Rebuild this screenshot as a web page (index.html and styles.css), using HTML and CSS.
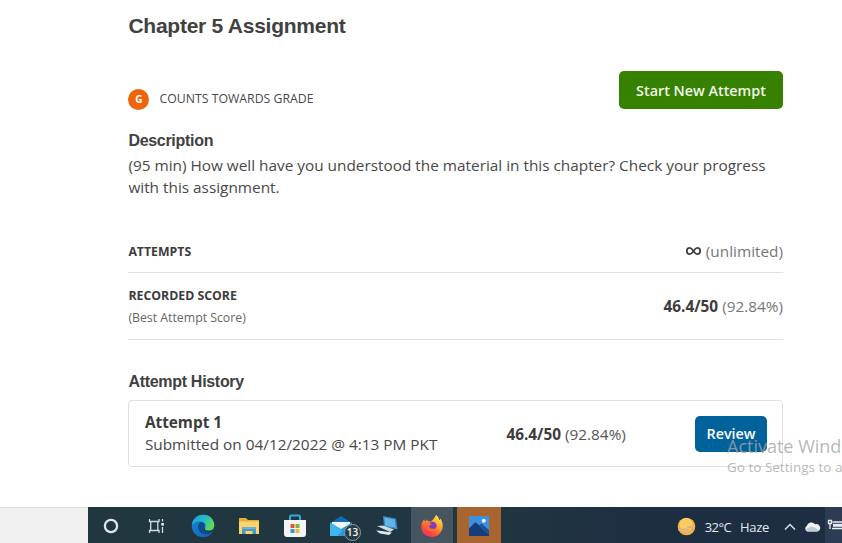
FILE: index.html
```
<!DOCTYPE html>
<html lang="en">
<head>
<meta charset="utf-8">
<title>Chapter 5 Assignment</title>
<link rel="stylesheet" href="styles.css">
</head>
<body>
<main class="page">
  <h1 class="title"><span>Chapter 5 Assignment</span></h1>
  <div class="summary">
    <div class="grade"><span class="grade-badge">G</span><span class="grade-label">COUNTS TOWARDS GRADE</span></div>
    <button class="btn btn-start"><span>Start New Attempt</span></button>
  </div>
  <h2 class="subhead description-head"><span>Description</span></h2>
  <p class="description"><span>(95 min) How well have you understood the material in this chapter? Check your progress</span><br><span>with this assignment.</span></p>
  <section class="row row-attempts">
    <div class="row-label"><span>ATTEMPTS</span></div>
    <div class="row-value"><svg class="infinity" width="15" height="10" viewBox="0 0 15 10"><path d="M7.5 5C6.2 3 5.2 1.8 3.8 1.8A2.9 3.1 0 0 0 3.8 8.2C5.2 8.2 6.2 7 7.5 5C8.8 3 9.8 1.8 11.2 1.8A2.9 3.1 0 0 1 11.2 8.2C9.8 8.2 8.8 7 7.5 5Z" fill="none" stroke="#3c3c3c" stroke-width="1.7"/></svg><span class="muted">(unlimited)</span></div>
  </section>
  <section class="row row-score">
    <div class="row-label"><span>RECORDED SCORE</span><small>(Best Attempt Score)</small></div>
    <div class="row-value"><b>46.4/50</b><span class="muted">(92.84%)</span></div>
  </section>
  <h2 class="subhead history-head"><span>Attempt History</span></h2>
  <section class="attempt">
    <div class="attempt-info"><b>Attempt 1</b><span>Submitted on 04/12/2022 @ 4:13 PM PKT</span></div>
    <div class="attempt-score"><b>46.4/50</b><span>(92.84%)</span></div>
    <button class="btn btn-review"><span>Review</span></button>
  </section>
</main>
<footer class="taskbar">
  <div class="search-end"></div>
  <div class="apps">
    <div class="app"><svg width="18" height="18" viewBox="0 0 18 18"><circle cx="9" cy="9" r="6.1" fill="none" stroke="#dfe6e9" stroke-width="2.3"/></svg></div>
    <div class="app"><svg width="18" height="18" viewBox="0 0 18 18" fill="none" stroke="#d3dbde" stroke-width="1.3"><path d="M1.500 2v2.500h9.500V2M1.500 16v-2.500h9.500V16M2.700 4.500v9M9.800 4.500v9M14.500 2v2.500M14.500 10v6"/><path d="M13.300 6h2.600v2.600h-2.600z" fill="#e6ecee" stroke="none"/></svg></div>
    <div class="app"><svg width="24" height="24" viewBox="0 0 24 24"><defs><linearGradient id="edge-top" x2="1" y2=".5"><stop stop-color="#1b9de2"/><stop offset=".55" stop-color="#25bbc4"/><stop offset="1" stop-color="#62d855"/></linearGradient><linearGradient id="edge-low" x2=".8" y2="1"><stop stop-color="#1685d8"/><stop offset="1" stop-color="#1464b8"/></linearGradient></defs><circle cx="12" cy="12" r="11.2" fill="url(#edge-low)"/><path d="M.8 11.6C1.6 5 6 .8 12 .8c7 0 11.4 5 11.3 10.4 0 3.5-2.6 5.3-5.5 5.3-2.7 0-4.4-1-3.8-2 1.5-2.5.6-6.4-4.1-7C6 7 2.2 8.500.8 11.6Z" fill="url(#edge-top)"/><path d="M9.500 8.300c-4.500 2.600-2.500 11.200 4.500 12 3.300.3 5.800-.8 7.700-2.600-3 1-6.700.5-8.500-1.900-1.200-1.500.4-2.800.5-4.500.1-1.500-1.700-3.500-4.200-3Z" fill="#0d4b8c"/><path d="M14 14.500c-.8 1.300 1.400 2.300 3.800 2.300 2.200 0 4-.8 4.900-2.300l-1.200 3.200c-3.100 1-6.800.3-8.300-1.900-.8-1 .2-1.700.7-2.500Z" fill="#203740"/></svg></div>
    <div class="app"><svg width="22" height="20" viewBox="0 0 22 20"><path d="M1 2h7l2 2h11v14H1z" fill="#e9ac36"/><path d="M1 5.500h20V18H1z" fill="#fad56d"/><path d="M4 18v-7h14v7h-3.500v-3h-7v3z" fill="#4799c7"/><path d="M4 11h14v2H4z" fill="#69b4d5"/></svg></div>
    <div class="app"><svg width="24" height="24" viewBox="0 0 24 24"><path d="M7 7V3q0-1.500 1.500-1.500h7Q17 1.500 17 3v4" fill="none" stroke="#36a7df" stroke-width="2"/><path d="M1 6h22v14q0 3-3 3H4q-3 0-3-3z" fill="#f3f5f5"/><path d="M7.500 10h4v4h-4z" fill="#e65335"/><path d="M12.500 10h4v4h-4z" fill="#80b536"/><path d="M7.500 15h4v4h-4z" fill="#299fd6"/><path d="M12.500 15h4v4h-4z" fill="#f4b52f"/></svg></div>
    <div class="app mail"><svg width="24" height="22" viewBox="0 0 24 22"><path d="M1 8 12 1l11 7v13H1z" fill="#1269b4"/><path d="M3 7h18v9H3z" fill="#f0f6f8"/><path d="M1 7.500 12 14l11-6.500V21H1z" fill="#259bdc"/><path d="M1 21V8l12 7.300L9 21z" fill="#42b7ee"/></svg><span class="mail-count">13</span></div>
    <div class="app"><svg width="24" height="22" viewBox="0 0 24 22"><path d="m8 1 13 2.500 1.500 11L9 12z" fill="#3687c5"/><path d="m9.300 2.500 10.400 2 1.100 8.300-10.400-2z" fill="#62b4e5"/><path d="m2 11 6-.500 11 4-4 2.500z" fill="#cfdae0"/><path d="m1 15.500 6 .500 10 1.500-3 2.500-9-1.500z" fill="#dfe7eb"/></svg></div>
    <div class="app app-firefox"><svg width="24" height="24" viewBox="0 0 24 24"><defs><linearGradient id="fire" x1=".85" x2=".2" y2="1"><stop stop-color="#fff04a"/><stop offset=".42" stop-color="#ff9a29"/><stop offset=".75" stop-color="#ff4741"/><stop offset="1" stop-color="#e93072"/></linearGradient></defs><path d="M16 1c2.500 1.800 3 3.600 3.200 5 .7-.4 1-1 1.200-1.600 2.600 4 3.400 9.100.6 13.300C18.800 21.200 15.700 23 12 23 5.800 23 1.200 18.500 1.200 12.600c0-3.300 1.300-5.500 3-7.400L5 7.700l2-2.200c.2 1.500 1.500 2.100 3.400 2.200C12 6.500 14.700 4.500 16 1Z" fill="url(#fire)"/><circle cx="12.400" cy="12" r="4.200" fill="#7b3bc2"/><path d="M4.500 9.500c2.500-1.800 5.800-.5 7.500 1-1.500.3-2.300 1.300-3.300 1.400 1.200 3.300 5 3.800 7.600 1.500-.7 4.700-8.500 5.800-11.800.6z" fill="#ff6b2c"/></svg></div>
    <div class="app app-photos"><svg width="22" height="22" viewBox="0 0 22 22"><path d="M1 1h20v20H1z" fill="#3f8fdd"/><path d="m1 13.500 5.500-5.500Q7.500 7 8.500 8L21 19.500V21H1z" fill="#153d79"/><path d="m11 10.300 1.500-1.300q1-.7 2 .3L21 15v4.500z" fill="#17569d"/><circle cx="15.800" cy="5.700" r="2" fill="#e8f6ff"/></svg></div>
  </div>
  <div class="tray">
    <svg class="sun" width="19" height="19" viewBox="0 0 19 19"><circle cx="9.500" cy="9.500" r="8.800" fill="#f4b33d"/><circle cx="9" cy="7.500" r="6.500" fill="#f9cd62"/><path d="M2 12.500h9M6 15h9M11 10h6" stroke="#e3b184" stroke-width="1.800" stroke-linecap="round"/></svg>
    <span class="temp">32°C</span><span class="weather">Haze</span>
    <svg class="chevron" width="12" height="8" viewBox="0 0 12 8"><path d="m1 6.500 5-5 5 5" fill="none" stroke="#d9e0e6" stroke-width="1.500"/></svg>
    <svg class="cloud" width="17" height="11" viewBox="0 0 17 11"><path d="M3.500 10.500A3 3 0 0 1 2.800 5 4.700 4.700 0 0 1 11 3.200 3.800 3.800 0 0 1 13.500 10.500Z" fill="#f2f5f7"/><path d="m2 8 6-2.700 7 3.500q-.5 1.700-2 1.700H4Q2.500 10.500 2 8Z" fill="#c2cbd3"/></svg>
    <div class="battery"><svg width="15" height="12" viewBox="0 0 15 12"><path d="M1.500 1.500h3v3h-3zM3 4.500V10M5.500 3H15M5 9.500H15" fill="none" stroke="#e7edf2" stroke-width="1.300"/><path d="M6 4.800h9v3H6z" fill="#e7edf2"/></svg></div>
  </div>
</footer>
<aside class="watermark"><span>Activate Wind</span><small>Go to Settings to a</small></aside>
</body>
</html>
```
FILE: styles.css
```
* { box-sizing: border-box; }
body {
  margin: 0;
  width: 842px;
  height: 543px;
  overflow: hidden;
  position: relative;
  display: flex;
  flex-direction: column;
  background: #fff;
  color: #484848;
  font: 16px/22px "Open Sans", sans-serif;
}
h1, h2, p { margin: 0; }
.page { height: 507px; padding: 0 59px 0 128.400px; }
.title { padding-top: 12px; font: bold 21px/28px "Liberation Sans", sans-serif; letter-spacing: -.25px; color: #414141; }
.summary { display: flex; justify-content: space-between; margin-top: 31px; height: 38px; }
.grade { display: flex; align-items: center; gap: 10px; padding-top: 18px; font-size: 12.300px; }
.grade-badge {
  width: 21px;
  height: 21px;
  border-radius: 50%;
  background: #ed6509;
  color: #fff;
  font-size: 10px;
  font-weight: 700;
  line-height: 21px;
  text-align: center;
}
.btn {
  border: 0;
  padding: 0;
  border-radius: 5px;
  color: #fff;
  font: 600 14.350px/20px "Open Sans", sans-serif;
  white-space: nowrap;
}
.btn-start { width: 164px; height: 38px; padding-top: 1px; background: #378100; color: #f2f8e9; }
.subhead { font: bold 16px/20px "Liberation Sans", sans-serif; letter-spacing: -.3px; color: #414141; }
.description-head { margin-top: 22px; }
.description { margin-top: 3px; height: 45px; font-size: 15.350px; line-height: 22px; white-space: nowrap; }
.row { display: flex; align-items: center; justify-content: space-between; border-bottom: 1px solid #e2e2e2; }
.row-attempts { height: 44px; margin-top: 30px; padding-top: 1px; }
.row-score { height: 67px; }
.row-label { display: flex; flex-direction: column; align-items: flex-start; padding-top: 2px; font-size: 12.300px; font-weight: 700; color: #3c3c3c; }
.row-label small { font-size: 12.300px; font-weight: 400; color: #666; }
.row-value { display: flex; align-items: center; gap: 4px; font-size: 15.350px; color: #3c3c3c; }
.infinity { margin-right: 1px; }
.muted { color: #777; }
.history-head { margin-top: 32px; }
.attempt {
  display: flex;
  align-items: center;
  height: 67px;
  margin-top: 8px;
  padding: 0 15px 0 15.500px;
  border: 1px solid #e0e0e0;
  border-radius: 4px;
}
.attempt-info { display: flex; flex-direction: column; align-items: flex-start; width: 361.500px; margin-top: -2px; white-space: nowrap; font-size: 15.350px; }
.attempt b { color: #3c3c3c; }
.attempt-score { display: flex; gap: 4px; font-size: 15.350px; color: #555; }
.btn-review { width: 72px; height: 36px; padding-top: 1px; margin-left: auto; background: #00629b; }
.taskbar { display: flex; height: 36px; background: linear-gradient(90deg, #203740 0%, #203640 58%, #1d2d42 78%, #1d2d42 100%); }
.search-end { width: 88px; background: #f0f0f0; border-top: 1px solid #ddd; }
.apps { display: flex; }
.app { display: grid; place-items: center; width: 46px; height: 36px; padding-top: 2px; }
.mail { position: relative; }
.mail-count {
  position: absolute;
  left: 26px;
  top: 17px;
  width: 17px;
  height: 17px;
  border: 1px solid #8d9ba1;
  border-radius: 50%;
  background: #263b45;
  color: #fff;
  font-size: 10px;
  font-weight: 600;
  line-height: 15px;
  text-align: center;
}
.app-firefox { width: 42px; margin-left: 1px; background: #465560; }
.app-photos { width: 44px; margin-left: 4px; background: #a8652f; }
.tray { display: flex; align-items: center; margin-left: auto; padding-top: 3px; color: #e5eaf0; font-size: 13px; }
.sun { margin-left: -1px; }
.temp { margin-left: 9px; letter-spacing: -.6px; }
.weather { margin-left: 9px; letter-spacing: -.3px; }
.chevron { margin-left: 15px; }
.cloud { margin-left: 8px; }
.battery { display: flex; align-items: center; width: 17px; height: 36px; margin: -3px 0 0 4px; padding-left: 2px; background: #2d3c52; }
.watermark { position: absolute; left: 727px; top: 435px; color: rgba(165, 165, 165, .8); white-space: nowrap; font-size: 18px; }
.watermark small { display: block; font-size: 13.500px; line-height: 20px; }
```
